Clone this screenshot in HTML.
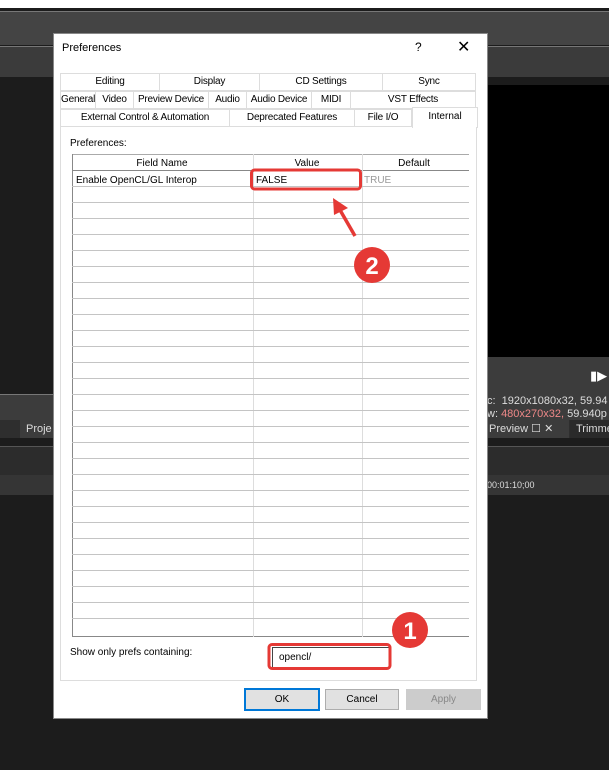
<!DOCTYPE html><html><head><style>
body{margin:0;width:609px;height:770px;position:relative;background:#1c1c1c;overflow:hidden;font-family:"Liberation Sans",sans-serif;font-size:11px;color:#000}
.a{position:absolute}
.t{position:absolute;box-sizing:border-box;text-align:center;border-right:1px solid #ddd;border-bottom:1px solid #ddd;border-top:1px solid #ddd;height:18px;line-height:16px;background:#fff;font-size:10px;white-space:nowrap;overflow:hidden;letter-spacing:-0.2px}
</style></head><body>
<div class="a" style="left:0;top:0;width:609px;height:8px;background:#fff"></div>
<div class="a" style="left:0;top:11px;width:609px;height:1px;background:#777"></div>
<div class="a" style="left:0;top:12px;width:609px;height:33px;background:#444"></div>
<div class="a" style="left:0;top:46px;width:609px;height:1px;background:#777"></div>
<div class="a" style="left:0;top:47px;width:609px;height:30px;background:#3b3b3b"></div>
<div class="a" style="left:487px;top:85px;width:122px;height:272px;background:#000"></div>
<div class="a" style="left:487px;top:357px;width:122px;height:64px;background:#3c3c3c"></div>
<div class="a" style="left:0;top:395px;width:53px;height:25px;background:#3c3c3c"></div>
<div class="a" style="left:0;top:394px;width:53px;height:1px;background:#777"></div>
<div class="a" style="left:0;top:420px;width:609px;height:18px;background:#2e2e2e"></div>
<div class="a" style="left:20px;top:420px;width:33px;height:18px;background:#3c3c3c;color:#ddd;line-height:18px;padding-left:6px">Proje</div>
<div class="a" style="left:487px;top:420px;width:80px;height:18px;background:#3c3c3c;color:#ddd;line-height:18px;padding-left:2px">Preview ☐ ✕</div>
<div class="a" style="left:570px;top:420px;width:39px;height:18px;background:#2a2a2a;color:#ddd;line-height:18px;padding-left:6px">Trimme</div>
<div class="a" style="left:0;top:446px;width:609px;height:1px;background:#555"></div>
<div class="a" style="left:0;top:447px;width:609px;height:28px;background:#2c2c2c"></div>
<div class="a" style="left:0;top:475px;width:609px;height:20px;background:#353535"></div>
<div class="a" style="left:487px;top:480px;color:#ddd;font-size:9px">00:01:10;00</div>
<div class="a" style="left:590px;top:368px;color:#fff;font-size:13px">▮▶</div>
<div class="a" style="left:487px;top:395px;color:#ddd;font-size:11px;white-space:nowrap">c:&nbsp; 1920x1080x32, 59.94</div>
<div class="a" style="left:487px;top:408px;color:#ddd;font-size:11px;white-space:nowrap">w: <span style="color:#e88">480x270x32,</span> 59.940p</div>

<div class="a" style="left:53px;top:33px;width:433px;height:684px;background:#fff;border:1px solid #888"></div>
<div class="a" style="left:62px;top:42px;font-size:11px">Preferences</div>
<div class="a" style="left:415px;top:40px;font-size:12px">?</div>
<div class="a" style="left:457px;top:37px;font-size:16px">✕</div>

<div class="t" style="left:60px;top:73px;width:100px;border-left:1px solid #ddd">Editing</div>
<div class="t" style="left:160px;top:73px;width:100px">Display</div>
<div class="t" style="left:260px;top:73px;width:123px">CD Settings</div>
<div class="t" style="left:383px;top:73px;width:93px">Sync</div>
<div class="t" style="left:60px;top:91px;width:36px;border-left:1px solid #ddd">General</div>
<div class="t" style="left:96px;top:91px;width:38px">Video</div>
<div class="t" style="left:134px;top:91px;width:75px">Preview Device</div>
<div class="t" style="left:209px;top:91px;width:38px">Audio</div>
<div class="t" style="left:247px;top:91px;width:65px">Audio Device</div>
<div class="t" style="left:312px;top:91px;width:39px">MIDI</div>
<div class="t" style="left:351px;top:91px;width:125px">VST Effects</div>
<div class="t" style="left:60px;top:109px;width:170px;border-left:1px solid #ddd">External Control &amp; Automation</div>
<div class="t" style="left:230px;top:109px;width:125px">Deprecated Features</div>
<div class="t" style="left:355px;top:109px;width:57px">File I/O</div>
<div class="a" style="left:412px;top:107px;width:64px;height:20px;text-align:center;line-height:18px;border:1px solid #ddd;border-bottom:none;background:#fff;font-size:10px">Internal</div>
<div class="a" style="left:60px;top:127px;width:415px;height:553px;border:1px solid #ddd;border-top:none"></div>
<div class="a" style="left:70px;top:138px;font-size:10px">Preferences:</div>
<svg class="a" style="left:72px;top:154px" width="397" height="483">
<line x1="0" y1="0.5" x2="397" y2="0.5" stroke="#aaa"/>
<line x1="0.5" y1="0" x2="0.5" y2="483" stroke="#888"/>
<line x1="0" y1="16.5" x2="397" y2="16.5" stroke="#888"/>
<line x1="0" y1="482.5" x2="397" y2="482.5" stroke="#888"/>
<g stroke="#ddd"><line x1="181.5" y1="0" x2="181.5" y2="483"/><line x1="290.5" y1="0" x2="290.5" y2="483"/></g>
<text x="90" y="12" font-size="10" text-anchor="middle" font-family="Liberation Sans">Field Name</text>
<text x="235" y="12" font-size="10" text-anchor="middle" font-family="Liberation Sans">Value</text>
<text x="342" y="12" font-size="10" text-anchor="middle" font-family="Liberation Sans">Default</text>
<text x="4" y="29" font-size="10" font-family="Liberation Sans">Enable OpenCL/GL Interop</text>
<text x="184" y="29" font-size="10" font-family="Liberation Sans">FALSE</text>
<text x="292" y="29" font-size="10" fill="#999" font-family="Liberation Sans">TRUE</text>
<g stroke="#c4c4c4">
<line x1="0" y1="32.5" x2="397" y2="32.5"/><line x1="0" y1="48.5" x2="397" y2="48.5"/><line x1="0" y1="64.5" x2="397" y2="64.5"/><line x1="0" y1="80.5" x2="397" y2="80.5"/><line x1="0" y1="96.5" x2="397" y2="96.5"/><line x1="0" y1="112.5" x2="397" y2="112.5"/><line x1="0" y1="128.5" x2="397" y2="128.5"/><line x1="0" y1="144.5" x2="397" y2="144.5"/><line x1="0" y1="160.5" x2="397" y2="160.5"/><line x1="0" y1="176.5" x2="397" y2="176.5"/><line x1="0" y1="192.5" x2="397" y2="192.5"/><line x1="0" y1="208.5" x2="397" y2="208.5"/><line x1="0" y1="224.5" x2="397" y2="224.5"/><line x1="0" y1="240.5" x2="397" y2="240.5"/><line x1="0" y1="256.5" x2="397" y2="256.5"/><line x1="0" y1="272.5" x2="397" y2="272.5"/><line x1="0" y1="288.5" x2="397" y2="288.5"/><line x1="0" y1="304.5" x2="397" y2="304.5"/><line x1="0" y1="320.5" x2="397" y2="320.5"/><line x1="0" y1="336.5" x2="397" y2="336.5"/><line x1="0" y1="352.5" x2="397" y2="352.5"/><line x1="0" y1="368.5" x2="397" y2="368.5"/><line x1="0" y1="384.5" x2="397" y2="384.5"/><line x1="0" y1="400.5" x2="397" y2="400.5"/><line x1="0" y1="416.5" x2="397" y2="416.5"/><line x1="0" y1="432.5" x2="397" y2="432.5"/><line x1="0" y1="448.5" x2="397" y2="448.5"/><line x1="0" y1="464.5" x2="397" y2="464.5"/>
</g>
</svg>
<div class="a" style="left:70px;top:647px;font-size:10px">Show only prefs containing:</div>
<div class="a" style="left:272px;top:647px;width:110px;height:19px;border:1px solid #444;padding-left:6px;line-height:19px;font-size:10px">opencl/</div>
<div class="a" style="left:244px;top:688px;width:72px;height:19px;border:2px solid #0078d7;background:#e1e1e1;text-align:center;line-height:19px;font-size:10px">OK</div>
<div class="a" style="left:325px;top:689px;width:72px;height:19px;border:1px solid #adadad;background:#e1e1e1;text-align:center;line-height:19px;font-size:10px">Cancel</div>
<div class="a" style="left:406px;top:689px;width:73px;height:19px;border:1px solid #ccc;background:#ccc;color:#888;text-align:center;line-height:19px;font-size:10px">Apply</div>

<svg class="a" style="left:0;top:0" width="609" height="770">
<rect x="251.5" y="170" width="109" height="19" rx="3" fill="none" stroke="#e53935" stroke-width="3"/>
<rect x="269" y="644.5" width="121" height="24" rx="3" fill="none" stroke="#e53935" stroke-width="3"/>
<line x1="355" y1="236" x2="340" y2="210" stroke="#e53935" stroke-width="3.5"/>
<polygon points="333,198 348,208 334,215" fill="#e53935"/>
<circle cx="372" cy="265" r="18" fill="#e53935"/>
<circle cx="410" cy="630" r="18" fill="#e53935"/>
<text x="372" y="274" font-size="24" font-weight="bold" fill="#fff" text-anchor="middle" font-family="Liberation Sans">2</text>
<text x="410" y="639" font-size="24" font-weight="bold" fill="#fff" text-anchor="middle" font-family="Liberation Sans">1</text>
</svg>
</body></html>
